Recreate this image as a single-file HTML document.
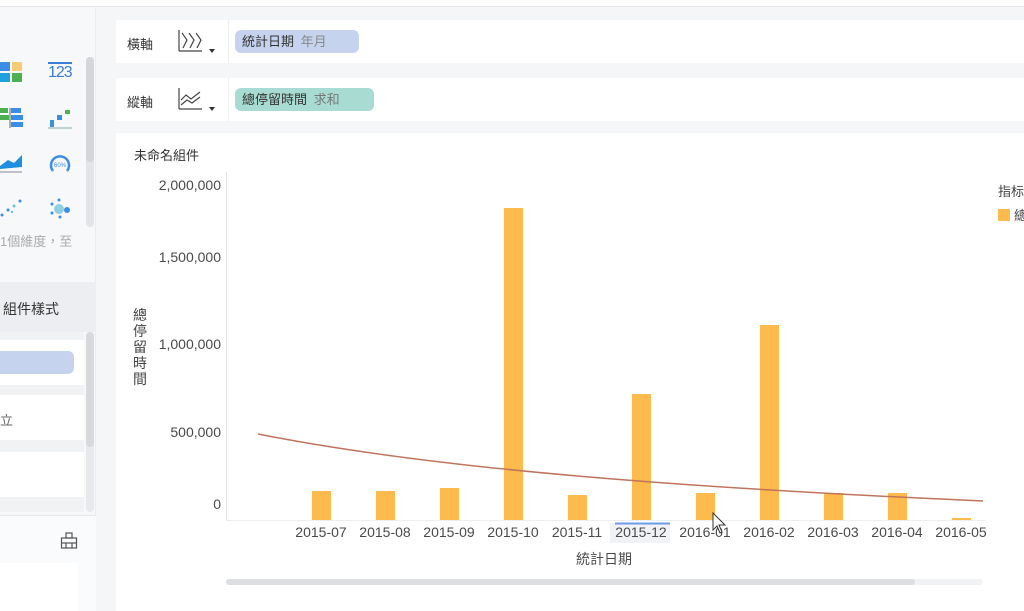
<!DOCTYPE html>
<html><head><meta charset="utf-8"><style>
*{margin:0;padding:0;box-sizing:border-box}
body{width:1024px;height:611px;overflow:hidden;background:#f5f6f8;font-family:"Liberation Sans","Noto Sans CJK TC",sans-serif;position:relative;color:#333}
.a{position:absolute}
</style></head><body>
<div class="a" style="left:0;top:0;width:1024px;height:7px;background:#fff;border-bottom:1px solid #e6e7ea"></div>
<div class="a" style="left:0;top:8px;width:96px;height:603px;background:#f7f8fa;border-right:1px solid #ebecef"></div>
<div class="a" style="left:0;top:62px;width:24px;height:20px">
<svg width="24" height="20"><rect x="0" y="0" width="10" height="9" fill="#3a8ee6"/><rect x="12" y="0" width="10" height="9" fill="#f5b942" opacity=".7"/><rect x="0" y="11" width="10" height="9" fill="#1fa0e0"/><rect x="12" y="11" width="10" height="9" fill="#4cb050"/></svg></div>
<div class="a" style="left:48px;top:62px;width:24px;font-size:16px;color:#3a7fd5;border-top:2px solid #3a7fd5;line-height:18px;letter-spacing:-1px">123</div>
<svg class="a" style="left:0;top:108px" width="24" height="20"><rect x="0" y="0" width="8" height="5" fill="#4cb050"/><rect x="11" y="0" width="10" height="5" fill="#3a8ee6"/><rect x="0" y="7" width="9" height="5" fill="#4cb050"/><rect x="11" y="7" width="12" height="5" fill="#3a8ee6"/><rect x="11" y="14" width="12" height="5" fill="#3a8ee6"/><line x1="10" y1="0" x2="10" y2="20" stroke="#666"/></svg>
<svg class="a" style="left:48px;top:108px" width="24" height="22"><rect x="2" y="12" width="4" height="7" fill="#3a8ee6"/><rect x="9" y="7" width="5" height="5" fill="#3a8ee6"/><rect x="17" y="2" width="5" height="4" fill="#4cb050"/><line x1="0" y1="20" x2="24" y2="20" stroke="#8aa"/></svg>
<svg class="a" style="left:0;top:152px" width="24" height="22"><path d="M0 14 L8 8 L14 11 L22 3 L22 15 L0 17Z" fill="#1f8ee0"/><line x1="0" y1="20" x2="22" y2="20" stroke="#889"/></svg>
<svg class="a" style="left:48px;top:152px" width="24" height="24"><path d="M5 19 A9 9 0 1 1 19 19" fill="none" stroke="#3a8ee6" stroke-width="2.5"/><text x="12" y="15" font-size="6" fill="#3a8ee6" text-anchor="middle">60%</text></svg>
<svg class="a" style="left:0;top:198px" width="24" height="20"><circle cx="2" cy="17" r="1.5" fill="#3a8ee6"/><circle cx="8" cy="12" r="1.5" fill="#3a8ee6"/><circle cx="14" cy="8" r="1.5" fill="#6cc"/><circle cx="20" cy="3" r="1.5" fill="#3a8ee6"/><circle cx="12" cy="14" r="1.2" fill="#6cc"/></svg>
<svg class="a" style="left:48px;top:198px" width="24" height="22"><circle cx="11" cy="11" r="5" fill="#8ed0e0"/><circle cx="19" cy="12" r="3" fill="#3a8ee6"/><circle cx="4" cy="6" r="1.5" fill="#3a8ee6"/><circle cx="11" cy="2" r="1.5" fill="#3a8ee6"/><circle cx="4" cy="15" r="1.5" fill="#3a8ee6"/><circle cx="12" cy="19" r="1.5" fill="#3a8ee6"/></svg>
<div class="a" style="left:0;top:231px;font-size:13px;color:#aaa;white-space:nowrap">1個維度，至</div>
<div class="a" style="left:86px;top:57px;width:8px;height:170px;background:#e3e4e7;border-radius:4px"><div style="height:105px;background:#d5d6da;border-radius:4px"></div></div>
<div class="a" style="left:0;top:282px;width:96px;height:50px;background:#eceef1"></div>
<div class="a" style="left:3px;top:299px;font-size:14px;color:#333">組件樣式</div>
<div class="a" style="left:0;top:332px;width:84px;height:180px;background:#f1f2f4"></div>
<div class="a" style="left:0;top:340px;width:84px;height:45px;background:#fff"></div>
<div class="a" style="left:0;top:351px;width:74px;height:23px;background:#c5d3ef;border-radius:0 6px 6px 0"></div>
<div class="a" style="left:0;top:395px;width:84px;height:45px;background:#fff"></div>
<div class="a" style="left:0;top:410px;font-size:13px;color:#666">立</div>
<div class="a" style="left:0;top:452px;width:84px;height:45px;background:#fff"></div>
<div class="a" style="left:86px;top:332px;width:8px;height:180px;background:#e8e9ec;border-radius:4px"><div style="height:115px;background:#d8d9dc;border-radius:4px"></div></div>
<div class="a" style="left:0;top:515px;width:96px;height:96px;background:#fafbfc;border-top:1px solid #e6e7ea"></div>
<svg class="a" style="left:60px;top:532px" width="18" height="18" fill="none" stroke="#555" stroke-width="1.2"><rect x="6" y="1" width="6" height="5"/><rect x="1.5" y="6" width="15" height="10"/><line x1="6" y1="11" x2="6" y2="16"/><line x1="12" y1="11" x2="12" y2="16"/><line x1="1.5" y1="11" x2="16.5" y2="11"/></svg>
<div class="a" style="left:0;top:563px;width:78px;height:48px;background:#fff"></div>
<div class="a" style="left:116px;top:20px;width:908px;height:43px;background:#fff"></div>
<div class="a" style="left:228px;top:20px;width:1px;height:43px;background:#eee"></div>
<div class="a" style="left:127px;top:34px;font-size:13px;color:#333">橫軸</div>
<svg class="a" style="left:178px;top:29px" width="42" height="26" fill="none" stroke="#444" stroke-width="1.2"><line x1="1" y1="1" x2="1" y2="22"/><line x1="1" y1="22" x2="24" y2="22"/><path d="M4 4 L9 11 L5 19 M11 4 L16 11 L12 19 M18 4 L23 11 L19 19"/><path d="M31 20 L37 20 L34 24Z" fill="#333" stroke="none"/></svg>
<div class="a" style="left:235px;top:30px;width:124px;height:23px;background:#c5d3ef;border-radius:6px;font-size:13px;line-height:23px;padding-left:7px;color:#333">統計日期 <span style="color:#888;margin-left:3px">年月</span></div>
<div class="a" style="left:116px;top:78px;width:908px;height:43px;background:#fff"></div>
<div class="a" style="left:228px;top:78px;width:1px;height:43px;background:#eee"></div>
<div class="a" style="left:127px;top:92px;font-size:13px;color:#333">縱軸</div>
<svg class="a" style="left:178px;top:87px" width="42" height="26" fill="none" stroke="#444" stroke-width="1.2"><line x1="1" y1="1" x2="1" y2="22"/><line x1="1" y1="22" x2="24" y2="22"/><path d="M3 13 L8 8 L13 12 L22 5 M3 18 L9 13 L14 16 L22 10"/><path d="M31 20 L37 20 L34 24Z" fill="#333" stroke="none"/></svg>
<div class="a" style="left:235px;top:88px;width:139px;height:23px;background:#a8dcd3;border-radius:6px;font-size:13px;line-height:23px;padding-left:7px;color:#333">總停留時間 <span style="color:#777;margin-left:3px">求和</span></div>
<div class="a" style="left:116px;top:133px;width:908px;height:478px;background:#fff"></div>
<div class="a" style="left:134px;top:145px;font-size:13px;color:#333">未命名組件</div>
<div class="a" style="left:133px;top:307px;width:16px;font-size:14px;line-height:16px;color:#444">總停留時間</div>
<div class="a" style="left:998px;top:181px;font-size:13px;color:#444">指标</div>
<div class="a" style="left:998px;top:209px;width:12px;height:12px;background:#fdba4d"></div>
<div class="a" style="left:1014px;top:205px;font-size:13px;color:#444">總</div>
<svg class="a" style="left:140px;top:170px" width="884" height="430" font-family="Liberation Sans, sans-serif" font-size="14" fill="#4a4a4a">
<line x1="86.5" y1="2" x2="86.5" y2="350" stroke="#e2e3e6"/>
<line x1="86" y1="350.5" x2="846" y2="350.5" stroke="#eceef0"/>
<g text-anchor="end"><text x="81" y="20">2,000,000</text><text x="81" y="92">1,500,000</text><text x="81" y="179">1,000,000</text><text x="81" y="267">500,000</text><text x="81" y="339">0</text></g>
<g fill="#fdba4d">
<rect x="172" y="321" width="19" height="29"/><rect x="236" y="321" width="19" height="29"/><rect x="300" y="318" width="19" height="32"/><rect x="364" y="38" width="19" height="312"/><rect x="428" y="325" width="19" height="25"/><rect x="492" y="224" width="19" height="126"/><rect x="556" y="323" width="19" height="27"/><rect x="620" y="155" width="19" height="195"/><rect x="684" y="323" width="19" height="27"/><rect x="748" y="323" width="19" height="27"/><rect x="812" y="348" width="19" height="2"/></g>
<path d="M118 264 C300 300 550 318 843 331" fill="none" stroke="#c0745e" stroke-width="1.5"/>
<rect x="470" y="353" width="60" height="20" fill="#f1f2f5"/>
<line x1="475" y1="353.5" x2="530" y2="353.5" stroke="#6c9be8" stroke-width="2"/>
<g text-anchor="middle"><text x="181" y="367">2015-07</text><text x="245" y="367">2015-08</text><text x="309" y="367">2015-09</text><text x="373" y="367">2015-10</text><text x="437" y="367">2015-11</text><text x="501" y="367">2015-12</text><text x="565" y="367">2016-01</text><text x="629" y="367">2016-02</text><text x="693" y="367">2016-03</text><text x="757" y="367">2016-04</text><text x="821" y="367">2016-05</text></g>
<text x="464" y="394" text-anchor="middle">統計日期</text>
<rect x="86" y="409" width="757" height="6" rx="3" fill="#f1f2f4"/>
<rect x="86" y="409" width="689" height="6" rx="3" fill="#dddee2"/>
<path d="M573 343 L573 360 L577 356 L580 363 L582 362 L579 355 L585 355Z" fill="#fff" stroke="#333" stroke-width="1"/>
</svg>
</body></html>
